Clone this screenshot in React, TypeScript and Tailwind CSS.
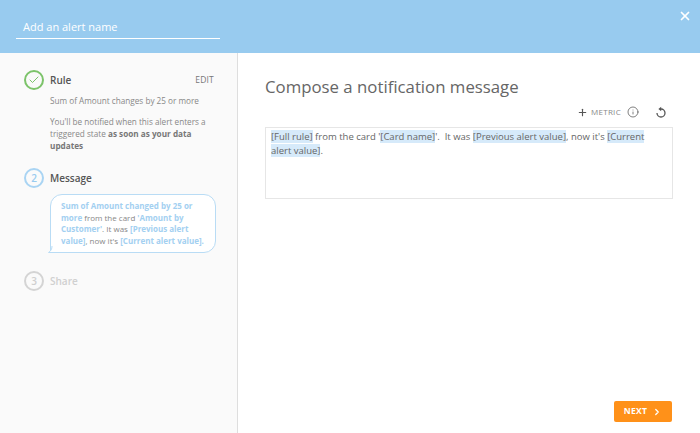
import { Plus, Info, X, ChevronRight, Check } from "lucide-react";

const tag = "bg-[#d6eafa]";
const accent = "font-bold text-[#a3d0f1]";

export default function App() {
  return (
    <div className="w-[700px] h-[433px] overflow-hidden flex flex-col bg-white font-['Open_Sans',sans-serif]">
      {/* header */}
      <div className="h-[53px] shrink-0 bg-[#98cbef] flex justify-between pl-4 pr-2">
        <div className="w-[204px] h-[39px] pt-[17px] pl-[7px] border-b border-white text-[11px] leading-5 text-white">
          Add an alert name
        </div>
        <X size={14} strokeWidth={3} className="text-white mt-[9px]" />
      </div>

      <div className="flex flex-1 min-h-0">
        {/* steps */}
        <div className="w-[238px] shrink-0 bg-[#fafafa] border-r border-[#dedede] pl-6 pr-[21px] pt-[17px]">
          <div className="flex items-center h-5">
            <div className="w-5 h-5 rounded-full border-2 border-[#7cc36a] flex items-center justify-center">
              <Check size={12} strokeWidth={2} className="text-[#7cc36a]" />
            </div>
            <span className="ml-[6px] text-[10px] font-semibold text-[#555]">Rule</span>
            <span className="ml-auto mr-[2px] text-[8.5px] tracking-[0.2px] text-[#777]">EDIT</span>
          </div>
          <div className="ml-[26px] mt-[5px] text-[8.2px] leading-[12px] text-[#888]">
            <p>Sum of Amount changes by 25 or more</p>
            <p className="mt-[9px]">
              You'll be notified when this alert enters a triggered state{" "}
              <span className="font-bold text-[#777]">as soon as your data updates</span>
            </p>
          </div>

          <div className="flex items-center h-5 mt-[16px]">
            <div className="w-5 h-5 rounded-full border-2 border-[#a9d4f3] flex items-center justify-center text-[10px] font-semibold text-[#98cbef]">
              2
            </div>
            <span className="ml-[6px] text-[10px] font-semibold text-[#555]">Message</span>
          </div>
          <div className="relative ml-[26px] mt-[6px] w-[166px] h-[59px] rounded-[12px] rounded-bl-[2px] border border-[#b9dcf5] bg-white pl-[10px] pr-1 pt-[5px] text-[8px] leading-[11.7px] text-[#888]">
            <span className={accent}>Sum of Amount changed by 25 or more</span> from the card{" "}
            <span className={accent}>'Amount by Customer'</span>. It was{" "}
            <span className={accent}>[Previous alert value]</span>, now it's{" "}
            <span className={accent}>[Current alert value].</span>
            <svg width="7" height="7" viewBox="0 0 7 7" className="absolute -left-[3px] -bottom-px">
              <path d="M4 0 C4 3 3 5 0.5 6.5 L7 6.5" fill="white" stroke="#b9dcf5" />
            </svg>
          </div>

          <div className="flex items-center h-5 mt-[18px]">
            <div className="w-5 h-5 rounded-full border-2 border-[#d4d4d4] flex items-center justify-center text-[10px] font-semibold text-[#cfcfcf]">
              3
            </div>
            <span className="ml-[6px] text-[10px] font-semibold text-[#d0d0d0]">Share</span>
          </div>
        </div>

        {/* message editor */}
        <div className="flex-1 flex flex-col pl-[27px] pr-[27px] pt-[22px] pb-[11px]">
          <h1 className="text-[16.8px] leading-6 font-normal text-[#666]">Compose a notification message</h1>
          <div className="flex items-center justify-end h-4 mt-[5px] pr-[6px] text-[#555]">
            <Plus size={11} strokeWidth={2.5} />
            <span className="ml-[3px] text-[8px] tracking-[0.3px] text-[#888]">METRIC</span>
            <Info size={12} strokeWidth={1.5} className="ml-[6px]" />
            <svg width="12" height="12" viewBox="0 0 12 12" className="ml-[16px]">
              <path d="M6 3 A4 4 0 1 1 2 7" fill="none" stroke="currentColor" strokeWidth="1.3" />
              <path d="M6.2 0.8 L3.4 3 L6.2 5.2 Z" fill="currentColor" />
            </svg>
          </div>
          <div className="mt-[7px] h-[72px] border border-[#e6e6e6] px-[5px] py-[2px] text-[9.5px] leading-[14px] text-[#666]">
            <span className={tag}>[Full rule]</span> from the card '<span className={tag}>[Card name]</span>'.&nbsp; It was{" "}
            <span className={tag}>[Previous alert value]</span>, now it's{" "}
            <span className={tag}>[Current alert value]</span>.
          </div>
          <div className="mt-auto flex justify-end pr-px">
            <button className="w-[58px] h-[21px] rounded-[2px] bg-[#ff9119] text-white text-[8.5px] font-bold tracking-[0.3px] flex items-center justify-center gap-[5px]">
              NEXT
              <ChevronRight size={10} strokeWidth={3} />
            </button>
          </div>
        </div>
      </div>
    </div>
  );
}
